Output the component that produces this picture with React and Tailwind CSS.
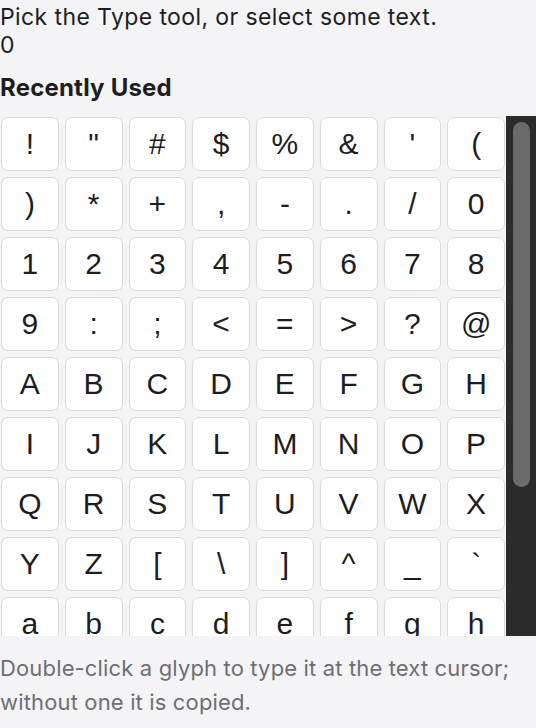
import React from "react";

const glyphs = Array.from({ length: 94 }, (_, i) => String.fromCharCode(33 + i));

function GlyphCell({ ch }) {
  return (
    <button
      type="button"
      className="h-[54px] flex items-center justify-center rounded-[7px] border-[1.5px] border-[#dadadc] bg-white text-[30px] leading-none text-[#1d1d1f] [font-family:'Liberation_Sans',Arial,sans-serif]"
    >
      {ch}
    </button>
  );
}

export default function App() {
  return (
    <div className="h-[728px] w-[536px] overflow-hidden bg-[#f4f4f6] text-[#1d1d1f] [font-family:Inter,'Noto_Sans',sans-serif]">
      {/* Header */}
      <div className="pt-[3px] text-[23px] leading-[28px] tracking-[0.4px]">
        <p>Pick the Type tool, or select some text.</p>
        <p>0</p>
      </div>
      <h2 className="mt-[15px] text-[24px] leading-[28px] font-bold tracking-[0.2px]">Recently Used</h2>

      {/* Glyph grid + scrollbar */}
      <div className="mt-[14px] flex h-[520px]">
        <div className="flex-1 overflow-hidden">
          <div className="grid grid-cols-8 gap-[6px] p-px">
            {glyphs.map((ch) => (
              <GlyphCell key={ch} ch={ch} />
            ))}
          </div>
        </div>
        <div className="w-[30px] bg-[#2b2b2b] pt-[6px] pl-[7px] pr-[6px]">
          <div className="h-[365px] rounded-full bg-[#6b6b6b]" />
        </div>
      </div>

      {/* Footer hint */}
      <p className="pt-[15px] text-[22px] leading-[34px] tracking-[0.15px] text-[#6e6e73]">
        Double-click a glyph to type it at the text cursor; without one it is copied.
      </p>
    </div>
  );
}
